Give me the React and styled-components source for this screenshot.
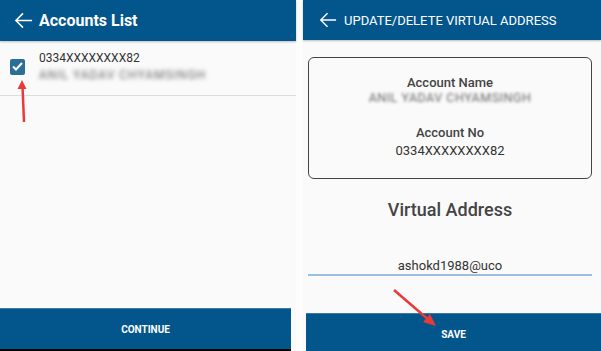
import React from 'react';
import styled, { createGlobalStyle } from 'styled-components';

const Global = createGlobalStyle`
  html, body { margin: 0; padding: 0; background: #fdfdfd; }
  body { font-family: Roboto, "Liberation Sans", sans-serif; }
`;

const BLUE = '#03568c';

const Screen = styled.div`
  position: relative;
  width: 601px;
  height: 351px;
  display: flex;
  overflow: hidden;
  background: #fdfdfd;
`;

const Panel = styled.div`
  display: flex;
  flex-direction: column;
  width: ${(p) => p.width};
  flex: ${(p) => (p.width ? 'none' : '1')};
  margin-left: ${(p) => p.offset || 0}px;
  background: #fafafa;
`;

const Header = styled.div`
  height: ${(p) => p.h}px;
  flex: none;
  display: flex;
  align-items: center;
  padding-left: ${(p) => p.pad}px;
  gap: ${(p) => p.gap}px;
  background: ${BLUE};
  color: #fff;
  box-shadow: 0 1px 2px rgba(0, 0, 0, 0.25);
`;

const Title = styled.span`
  font-size: ${(p) => p.size}px;
  font-weight: ${(p) => (p.bold ? 700 : 400)};
`;

const Row = styled.div`
  display: flex;
  align-items: center;
  gap: 14px;
  padding: 10px 0 13px 10px;
  border-bottom: 1px solid #ddd;
`;

const Check = styled.div`
  width: 15px;
  height: 16px;
  border-radius: 2px;
  background: #2a6f98;
  display: flex;
  align-items: center;
  justify-content: center;
`;

const Lines = styled.div`
  display: flex;
  flex-direction: column;
  gap: 3px;
  color: #333;
  font-size: 12px;
`;

const Blurred = styled.span`
  color: #666;
  font-size: ${(p) => p.size || 12}px;
  filter: blur(${(p) => p.amount || 2}px);
  letter-spacing: ${(p) => p.spacing || 0.5}px;
`;

const Footer = styled.div`
  margin-top: auto;
  height: ${(p) => p.h}px;
  margin-right: ${(p) => p.right || 0}px;
  margin-left: ${(p) => p.left || 0}px;
  display: flex;
  align-items: center;
  justify-content: center;
  padding-top: ${(p) => p.top || 0}px;
  box-sizing: border-box;
  background: ${BLUE};
  color: #fff;
  font-size: 10px;
  font-weight: 700;
  border-top: 1px solid #3c7aa6;
  border-bottom: ${(p) => (p.dark ? '2px solid #000' : 'none')};
`;

const Card = styled.div`
  margin: 17px 9px 0 5px;
  height: 122px;
  box-sizing: border-box;
  border: 1px solid #444;
  border-radius: 6px;
  display: flex;
  flex-direction: column;
  align-items: center;
  padding-top: 17px;
`;

const Label = styled.div`
  color: #444;
  font-size: 13px;
  font-weight: 500;
  margin-top: ${(p) => p.top || 0}px;
`;

const Value = styled.div`
  color: #333;
  font-size: 13px;
  margin-top: 3px;
`;

const Heading = styled.div`
  text-align: center;
  color: #444;
  font-size: 18px;
  font-weight: 500;
  margin: 20px 0 0 -4px;
`;

const Field = styled.div`
  margin: 38px 9px 0 5px;
  text-align: center;
  color: #333;
  font-size: 13px;
  padding-bottom: 1px;
  border-bottom: 2px solid #9bbfdc;
`;

const Arrow = styled.svg`
  position: absolute;
  left: ${(p) => p.x}px;
  top: ${(p) => p.y}px;
`;

const BackArrow = ({ size }) => (
  <svg width={size} height={size} viewBox="0 0 20 20" fill="none" stroke="#fff" strokeWidth="1.6">
    <path d="M19 10H2M9.5 2.5L2 10l7.5 7.5" />
  </svg>
);

export default function App() {
  return (
    <Screen>
      <Global />
      <Panel width="296px">
        <Header h={41} pad={14} gap={6}>
          <BackArrow size={19} />
          <Title size={16} bold>Accounts List</Title>
        </Header>
        <Row>
          <Check>
            <svg width="11" height="9" viewBox="0 0 11 9" fill="none" stroke="#fff" strokeWidth="2">
              <path d="M1 4.5l3 3L10 1" />
            </svg>
          </Check>
          <Lines>
            <span>0334XXXXXXXX82</span>
            <Blurred size={12} spacing={1}>ANIL YADAV CHYAMSINGH</Blurred>
          </Lines>
        </Row>
        <Footer h={43} right={5} top={1} dark>CONTINUE</Footer>
      </Panel>
      <Panel offset={7}>
        <Header h={40} pad={16} gap={7}>
          <BackArrow size={18} />
          <Title size={13}>UPDATE/DELETE VIRTUAL ADDRESS</Title>
        </Header>
        <Card>
          <Label>Account Name</Label>
          <Blurred amount={1.5} size={12.5}>ANIL YADAV CHYAMSINGH</Blurred>
          <Label top={20}>Account No</Label>
          <Value>0334XXXXXXXX82</Value>
        </Card>
        <Heading>Virtual Address</Heading>
        <Field>ashokd1988@uco</Field>
        <Footer h={38} left={3} top={4}>SAVE</Footer>
      </Panel>
      <Arrow x={16} y={78} width="14" height="46" viewBox="0 0 14 46">
        <path d="M8 44L6.5 8" stroke="#e83a3a" strokeWidth="2.5" fill="none" />
        <path d="M6 2L1.5 11h9z" fill="#e83a3a" />
      </Arrow>
      <Arrow x={390} y={286} width="50" height="44" viewBox="0 0 50 44">
        <path d="M4 4L40 35" stroke="#e83a3a" strokeWidth="2.5" fill="none" />
        <path d="M46 40L33 36l7-8z" fill="#e83a3a" />
      </Arrow>
    </Screen>
  );
}
